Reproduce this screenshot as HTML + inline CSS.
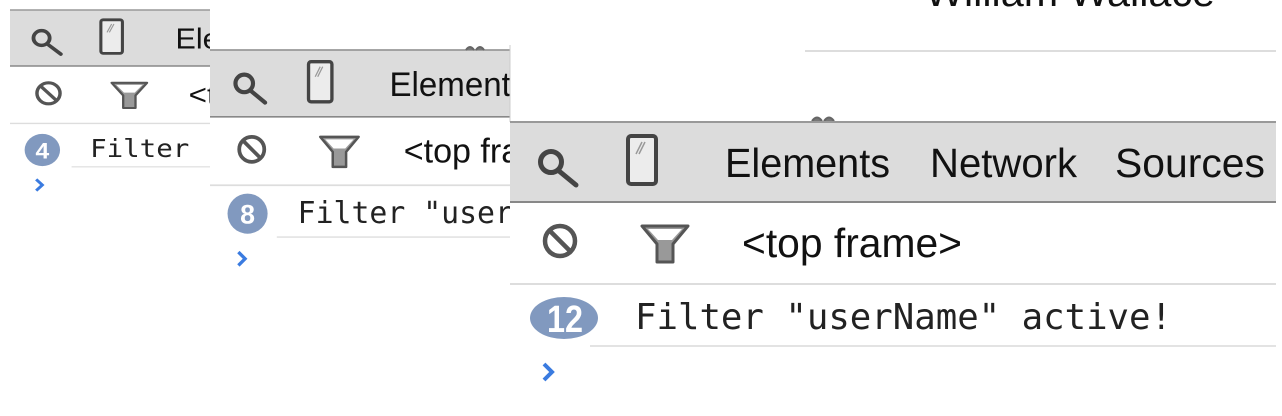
<!DOCTYPE html>
<html><head><meta charset="utf-8"><style>
html,body{margin:0;padding:0;background:#fff;width:1282px;height:416px;overflow:hidden}
svg{display:block}
.ui{font-family:"Liberation Sans",sans-serif;fill:#111}
.mono{font-family:"DejaVu Sans Mono","Liberation Mono",monospace;fill:#222}
</style></head><body>
<svg width="1282" height="416" viewBox="0 0 1282 416" xmlns="http://www.w3.org/2000/svg">
<defs>
<g id="panel">
  <rect x="0" y="0" width="766" height="80" fill="#dcdcdc"/>
  <line x1="0" y1="0" x2="766" y2="0" stroke="#999" stroke-width="2"/>
  <line x1="0" y1="80" x2="766" y2="80" stroke="#888" stroke-width="2"/>
  <circle cx="41" cy="40" r="10.5" fill="none" stroke="#444" stroke-width="5"/>
  <line x1="49" y1="49" x2="66" y2="63" stroke="#444" stroke-width="5" stroke-linecap="round"/>
  <rect x="118" y="14" width="28" height="48" rx="3" fill="#ececec" stroke="#444" stroke-width="4"/>
  <line x1="126" y1="32" x2="132" y2="20" stroke="#999" stroke-width="1.5"/>
  <line x1="129" y1="32" x2="135" y2="20" stroke="#999" stroke-width="1.5"/>
  <text class="ui" x="215" y="55" font-size="41" textLength="165" lengthAdjust="spacingAndGlyphs">Elements</text>
  <text class="ui" x="420" y="55" font-size="41" textLength="147" lengthAdjust="spacingAndGlyphs">Network</text>
  <text class="ui" x="605" y="55" font-size="41" textLength="150" lengthAdjust="spacingAndGlyphs">Sources</text>
  <circle cx="50" cy="119" r="15" fill="none" stroke="#555" stroke-width="4.5"/>
  <line x1="40" y1="109" x2="60" y2="129" stroke="#555" stroke-width="4.5"/>
  <path d="M132 104 L178 104 L163 122 L163 140 L147 140 L147 122 Z" fill="#999" stroke="#555" stroke-width="3" stroke-linejoin="round"/>
  <path d="M138 107 L172 107 L162 118 L148 118 Z" fill="#fff"/>
  <text class="ui" x="232" y="135" font-size="41" fill="#222" textLength="220" lengthAdjust="spacingAndGlyphs">&lt;top frame&gt;</text>
  <line x1="0" y1="162" x2="766" y2="162" stroke="#ddd" stroke-width="2"/>
  <line x1="80" y1="224" x2="766" y2="224" stroke="#e3e3e3" stroke-width="2"/>
  <path d="M34 242 L42 250 L34 258" fill="none" stroke="#3a7be0" stroke-width="4"/>
</g>
</defs>

<!-- panel 1 -->
<g transform="translate(10,10) scale(0.77,0.7)">
  <use href="#panel"/>
  <circle cx="42" cy="200" r="23" fill="#8199bf"/>
  <text x="42" y="212" font-size="32" font-weight="bold" text-anchor="middle" fill="#fff" font-family="Liberation Sans,sans-serif">4</text>
  <text class="mono" x="104" y="210" font-size="36" textLength="537" lengthAdjust="spacingAndGlyphs">Filter "userName" active!</text>
</g>

<!-- panel 2 -->
<rect x="210" y="0" width="300" height="416" fill="#fff"/>
<g transform="translate(210,50) scale(0.835)">
  <use href="#panel"/>
  <circle cx="45" cy="196" r="24" fill="#8199bf"/>
  <text x="45" y="208" font-size="32" font-weight="bold" text-anchor="middle" fill="#fff" font-family="Liberation Sans,sans-serif">8</text>
  <text class="mono" x="105" y="207" font-size="36" textLength="537" lengthAdjust="spacingAndGlyphs">Filter "userName" active!</text>
</g>
<path d="M466 50 q4 -6 8 0 M476 50 q4 -6 8 0" fill="#777" stroke="#666" stroke-width="2"/>

<!-- panel 3 -->
<rect x="510" y="0" width="772" height="416" fill="#fff"/>
<line x1="510" y1="45" x2="510" y2="122" stroke="#ccc" stroke-width="1"/>
<text class="ui" x="925" y="6" font-size="40" fill="#333" textLength="290" lengthAdjust="spacingAndGlyphs">William Wallace</text>
<line x1="805" y1="51" x2="1276" y2="51" stroke="#ddd" stroke-width="2"/>
<path d="M812 121 q5 -7 10 0 M824 121 q5 -7 10 0" fill="#777" stroke="#666" stroke-width="2"/>
<g transform="translate(510,122)">
  <use href="#panel"/>
  <ellipse cx="54" cy="196" rx="34" ry="21" fill="#8199bf"/>
  <text x="37" y="210" font-size="38" font-weight="bold" fill="#fff" font-family="Liberation Sans,sans-serif" textLength="36" lengthAdjust="spacingAndGlyphs">12</text>
  <text class="mono" x="125" y="207" font-size="36" textLength="537" lengthAdjust="spacingAndGlyphs">Filter "userName" active!</text>
</g>
</svg>
</body></html>
